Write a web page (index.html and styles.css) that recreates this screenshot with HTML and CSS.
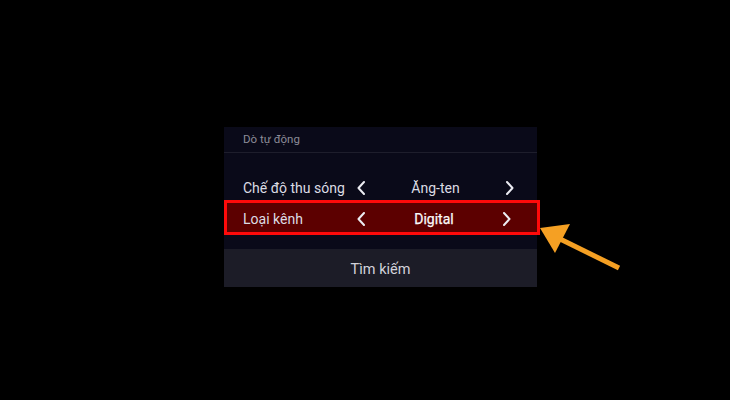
FILE: index.html
```html
<!DOCTYPE html>
<html lang="vi">
<head>
  <meta charset="UTF-8" />
  <meta name="viewport" content="width=device-width, initial-scale=1" />
  <title>Dò tự động</title>
  <link rel="stylesheet" href="styles.css">
</head>
<body>
  <div class="screen">
    <section class="panel">
      <div class="panel-title">Dò tự động</div>

      <div class="rows">
        <div class="row">
          <span class="label">Chế độ thu sóng</span>
          <svg class="chev" viewBox="0 0 8 14"><polyline points="7,1 1.5,7 7,13" /></svg>
          <span class="value">Ăng-ten</span>
          <svg class="chev" viewBox="0 0 8 14"><polyline points="1,1 6.5,7 1,13" /></svg>
        </div>
        <div class="row active">
          <span class="label">Loại kênh</span>
          <svg class="chev" viewBox="0 0 8 14"><polyline points="7,1 1.5,7 7,13" /></svg>
          <span class="value strong">Digital</span>
          <svg class="chev" viewBox="0 0 8 14"><polyline points="1,1 6.5,7 1,13" /></svg>
        </div>
      </div>

      <button class="search">Tìm kiếm</button>
    </section>

    <!-- mũi tên chỉ vào dòng đang chọn -->
    <svg class="pointer" width="100" height="60" viewBox="0 0 100 60">
      <line x1="14" y1="10" x2="79" y2="42" />
      <polygon points="0,2 30,-2 15,27" />
    </svg>
  </div>
</body>
</html>
```

FILE: styles.css
```css
body {
  margin: 0;
  background: #000;
  font-family: Roboto, 'Noto Sans', sans-serif;
}
.screen {
  position: relative;
  width: 730px;
  height: 400px;
  overflow: hidden;
}
.panel {
  width: 313px;
  margin: 0 0 0 224px;
  padding-top: 127px;
}
.panel-title {
  height: 25px;
  line-height: 25px;
  padding-left: 19px;
  font-size: 11.5px;
  color: #8c8c98;
  background: #0a0a19;
  border-bottom: 1px solid #1e1e2c;
}
.rows {
  background: #0a0a19;
  padding: 17px 0 15px;
}
.row {
  box-sizing: border-box;
  display: grid;
  grid-template-columns: 114px 8px 1fr 8px;
  align-items: center;
  height: 32px;
  padding: 3px 23px 0 19px;
  font-size: 14px;
  color: #dcdce4;
}
.row.active {
  height: 35px;
  margin: -2px -3px -1px 0;
  padding: 3px 26px 0 16px;
  background: #5c0000;
  border: 3px solid #ff0a0a;
}
.label {
  white-space: nowrap;
}
.value {
  text-align: center;
}
.value.strong {
  color: #fafafa;
  -webkit-text-stroke: 0.25px #fafafa;
}
.chev {
  width: 8px;
  height: 14px;
}
.chev polyline {
  fill: none;
  stroke: #ececf2;
  stroke-width: 2;
  stroke-linecap: round;
  stroke-linejoin: round;
}
.search {
  display: block;
  width: 100%;
  height: 38px;
  border: none;
  background: #1c1c27;
  color: #d2d2da;
  font-family: inherit;
  font-size: 14.5px;
  padding: 3px 0 0;
}
.pointer {
  position: absolute;
  left: 540px;
  top: 226px;
  overflow: visible;
}
.pointer line {
  stroke: #f5a023;
  stroke-width: 5;
  stroke-linecap: butt;
}
.pointer polygon {
  fill: #f5a023;
}
```
